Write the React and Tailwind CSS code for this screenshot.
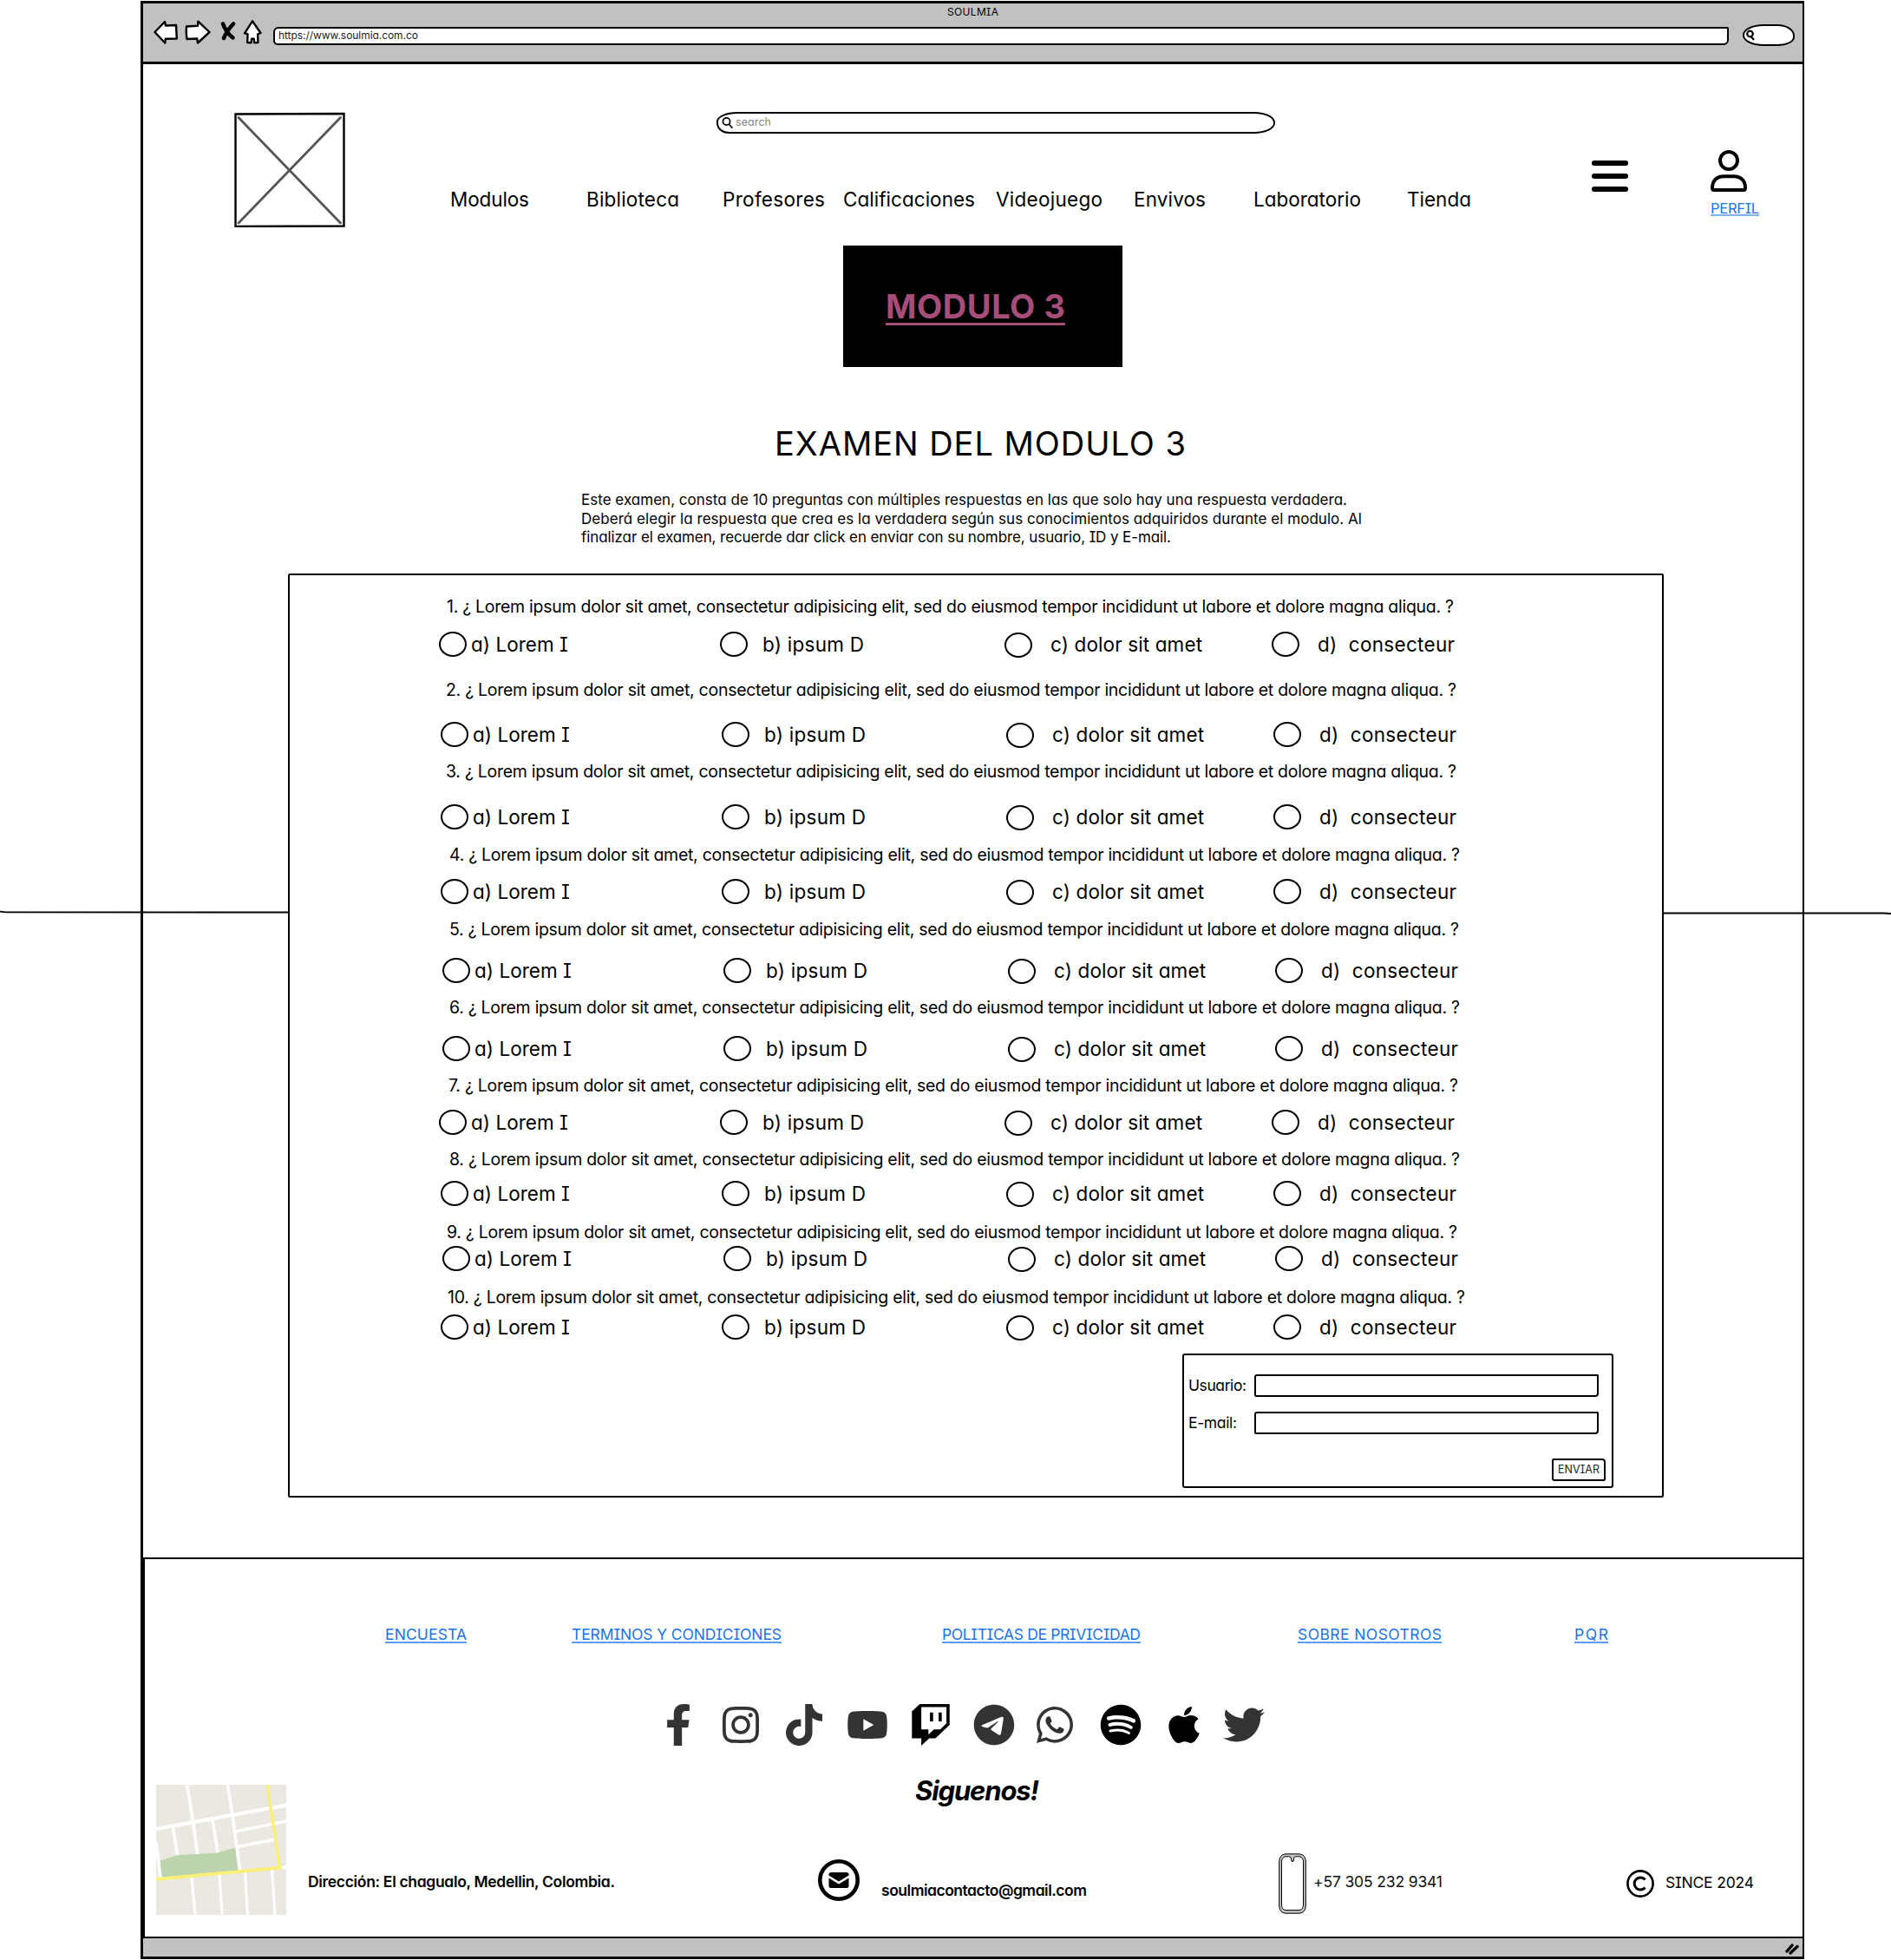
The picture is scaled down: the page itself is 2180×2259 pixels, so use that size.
import { useLayoutEffect, useRef } from "react";
import { FaFacebookF } from "react-icons/fa";
import {
  FaInstagram, FaTiktok, FaYoutube, FaTwitch, FaTelegram,
  FaWhatsapp, FaSpotify, FaApple, FaTwitter,
} from "react-icons/fa6";

/* A single line of text whose tracking is tuned to fill the width of its box. */
function T({ className = "", children }) {
  const box = useRef(null);
  const ink = useRef(null);
  useLayoutEffect(() => {
    const el = ink.current;
    el.style.letterSpacing = "0px";
    const target = box.current.clientWidth;
    const natural = el.getBoundingClientRect().width;
    const n = el.textContent.length - 1;
    el.style.letterSpacing = `${(target - natural) / n}px`;
  }, [children]);
  return (
    <div ref={box} className={`flex shrink-0 items-center whitespace-pre ${className}`}>
      <span ref={ink}>{children}</span>
    </div>
  );
}

const NAV = [
  ["Modulos", "ml-[1px] w-[91px]"],
  ["Biblioteca", "ml-[66px] w-[107px]"],
  ["Profesores", "ml-[50px] w-[118px]"],
  ["Calificaciones", "ml-[21px] w-[152px]"],
  ["Videojuego", "ml-[24px] w-[123px]"],
  ["Envivos", "ml-[36px] w-[83px]"],
  ["Laboratorio", "ml-[55px] w-[124px]"],
  ["Tienda", "ml-[53px] w-[74px]"],
];

const QUESTIONS = [
  { q: "mt-[23px] ml-[181px] w-[1161px]", o: "mt-[13px] ml-[172px]" },
  { q: "mt-[23px] ml-[180px] w-[1165px]", o: "mt-[21px] ml-[174px]" },
  { q: "mt-[13px] ml-[180px] w-[1165px]", o: "mt-[22px] ml-[174px]" },
  { q: "mt-[14px] ml-[184px] w-[1165px]", o: "mt-[12px] ml-[174px]" },
  { q: "mt-[14px] ml-[184px] w-[1164px]", o: "mt-[17px] ml-[176px]" },
  { q: "mt-[13px] ml-[184px] w-[1165px]", o: "mt-[17px] ml-[176px]" },
  { q: "mt-[13px] ml-[183px] w-[1164px]", o: "mt-[12px] ml-[172px]" },
  { q: "mt-[13px] ml-[184px] w-[1165px]", o: "mt-[9px] ml-[174px]" },
  { q: "mt-[15px] ml-[181px] w-[1165px]", o: "mt-0 ml-[176px]" },
  { q: "mt-[15px] ml-[182px] w-[1173px]", o: "mt-[4px] ml-[174px]" },
];

const LOREM =
  "¿ Lorem ipsum dolor sit amet, consectetur adipisicing elit, sed do eiusmod tempor incididunt ut labore et dolore magna aliqua. ?";

function Radio({ className }) {
  return <span className={`h-[29px] w-[32px] shrink-0 rounded-[50%] border-2 border-black ${className}`} />;
}

function Question({ n, q, o }) {
  return (
    <>
      <T className={`h-[28px] text-[19.5px] ${q}`}>{`${n}. ${LOREM}`}</T>
      <div className={`flex h-[32px] items-center text-[22.5px] ${o}`}>
        <Radio className="-mt-[2px]" />
        <T className="ml-[5px] w-[112px]">a) Lorem I</T>
        <Radio className="-mt-[2px] ml-[175px]" />
        <T className="ml-[17px] w-[117px]">b) ipsum D</T>
        <Radio className="ml-[162px] mt-[1px]" />
        <T className="ml-[21px] w-[175px]">c) dolor sit amet</T>
        <Radio className="-mt-[2px] ml-[80px]" />
        <T className="ml-[21px] w-[158px]">{"d)  consecteur"}</T>
      </div>
    </>
  );
}

function BrowserBar() {
  return (
    <header className="flex h-[73px] flex-col border-b-[3px] border-t-[3px] border-black bg-[#c1c1c1]">
      <T className="ml-[927px] mt-[1px] h-[18px] w-[59px] text-[12px]">SOULMIA</T>
      <div className="flex h-[32px] items-start">
        <svg className="ml-[12px] h-[28px] w-[127px]" viewBox="0 0 127 28" fill="#fff" stroke="#000" strokeWidth="2.4" strokeLinejoin="round">
          <path d="M1.500 14 13 2l1 4.500 12-.5.8 15.500-13 .3-.6 4.700Z" />
          <path d="M38 7.500l13-.8.4-5L64.500 14 51 26.500l-.8-5L38.500 22q-1.200-7-.5-14.500Z" />
          <path d="M80 4.500 Q84 15 91.500 20.500M92 4.500 Q84 13 81 21" strokeWidth="4.600" strokeLinecap="round" fill="none" />
          <path d="M114 1.300 123.500 15l-3.400 1.300.4 9.700-4.300.2-.5-4.500-2.700.1-.4 4.400-4.400-.2.3-9.800-3.500-.8Z" />
        </svg>
        <div className="ml-[11px] mt-[8px] flex h-[21px] w-[1678px] items-center rounded-[6px_2px_6px_5px] border-[2.500px] border-black bg-white">
          <T className="-mt-[1px] ml-[4px] w-[161px] text-[12px] text-[#222]">https://www.soulmia.com.co</T>
        </div>
        <div className="ml-[16px] mt-[5px] flex h-[25px] w-[60px] items-center rounded-[24px_20px_20px_24px/12px_13px_10px_12px] border-[2.500px] border-black bg-white">
          <svg className="ml-[1px] h-[13px] w-[11px]" viewBox="0 0 11 13" fill="none" stroke="#000" strokeWidth="2.200">
            <circle cx="5.500" cy="5" r="3.300" />
            <path d="m6.500 8 3.500 4" />
          </svg>
        </div>
      </div>
    </header>
  );
}

function SiteHeader() {
  return (
    <div className="flex h-[209px] items-start pt-[55px]">
      <svg className="ml-[105px] h-[133px] w-[128px]" viewBox="0 0 128 133" fill="none">
        <path d="M1.500 2.500 126.500 2v129.500l-125 .5Z" stroke="#000" strokeWidth="2.400" />
        <path d="M5 6.500 122.500 128M122.500 6.500 5 128" stroke="#555" strokeWidth="2.800" strokeLinecap="round" />
      </svg>
      <div className="ml-[120px] w-[1178px]">
        <div className="ml-[308px] flex h-[25px] w-[644px] items-center rounded-[24px_24px_24px_14px/11px_12px_12px_12px] border-2 border-black">
          <svg className="ml-[4px] h-[13px] w-[13px]" viewBox="0 0 13 13" fill="none" stroke="#000" strokeWidth="1.700" strokeLinecap="round">
            <circle cx="5.500" cy="5" r="4.100" />
            <path d="m8.500 8.300 3.500 3.900" />
          </svg>
          <T className="ml-[3px] w-[41px] text-[12.500px] text-[#85858c]">search</T>
        </div>
        <nav className="mt-[62px] flex h-[28px] items-center text-[22.500px]">
          {NAV.map(([label, cls]) => (
            <T key={label} className={cls}>{label}</T>
          ))}
        </nav>
      </div>
      <div className="ml-[139px] mt-[56px] flex w-[42px] flex-col gap-[9px]">
        <span className="h-[6px] rounded-full bg-black" />
        <span className="h-[6px] rounded-full bg-black" />
        <span className="h-[6px] rounded-full bg-black" />
      </div>
      <div className="ml-[95px] mt-[44px]">
        <svg className="h-[48px] w-[42px]" viewBox="0 0 42 48" fill="none" stroke="#000" strokeWidth="4">
          <circle cx="21" cy="12" r="10" />
          <path d="M2 43.500C2 35 7.500 30.200 15 30.200h12c7.500 0 13 4.800 13 13.300q0 2.500-2 2.500H4q-2 0-2-2.500Z" />
        </svg>
        <T className="mt-[6px] h-[22px] w-[56px] border-b-2 border-[#7fb1f5] pt-[6px] text-[16.500px] text-[#1a73e8]">PERFIL</T>
      </div>
    </div>
  );
}

function ExamForm() {
  return (
    <div className="ml-[1029px] mt-[14px] flex h-[155px] w-[497px] flex-col rounded-[3px] border-[2.500px] border-black text-[17.500px]">
      <div className="mt-[21px] flex h-[27px] items-center">
        <T className="ml-[5px] w-[67px]">Usuario:</T>
        <div className="ml-[9px] h-[26px] w-[397px] rounded-[3px_1px_4px_2px] border-[2.500px] border-black" />
      </div>
      <div className="mt-[16px] flex h-[27px] items-center">
        <T className="ml-[5px] w-[56px]">E-mail:</T>
        <div className="ml-[20px] h-[26px] w-[397px] rounded-[3px_1px_4px_2px] border-[2.500px] border-black" />
      </div>
      <button className="ml-[424px] mt-[28px] flex h-[26px] w-[62px] items-center rounded-[2px_4px_2px_3px] border-[2.500px] border-black">
        <T className="ml-[5px] w-[48px] text-[12.500px] text-[#222]">ENVIAR</T>
      </button>
    </div>
  );
}

const LINKS = [
  ["ENCUESTA", "ml-[277px] w-[94px]"],
  ["TERMINOS Y CONDICIONES", "ml-[121px] w-[242px]"],
  ["POLITICAS DE PRIVICIDAD", "ml-[185px] w-[229px]"],
  ["SOBRE NOSOTROS", "ml-[181px] w-[166px]"],
  ["PQR", "ml-[153px] w-[39px]"],
];

function CityMap() {
  return (
    <svg className="ml-[13px] h-[150px] w-[150px] shrink-0" viewBox="0 0 150 150" fill="none" stroke="#fff">
      <path d="M0 0h150v150H0Z" fill="#ebe8e1" stroke="none" />
      <path d="M4 88 25 81 70 78.500 91 72.500 95 98.500 6 107Z" fill="#bcd4ad" stroke="none" />
      <path d="M0 51 150 23.500" strokeWidth="4.200" />
      <path d="M35.500 0 42.500 42 47.500 80M82.500 0 88 35 96.500 98" strokeWidth="3.600" />
      <path d="M19.500 49 24.500 81M65 40 71 78M0 66 5 107M91 54 150 42M94 71.500 137 63M138 96.500 150 95" strokeWidth="3.400" />
      <path d="M41 107 45 150M73 104 76 150M102.500 101 105.500 150M133.500 98 137 150" strokeWidth="3.200" />
      <path d="M128 0 143 97.500" stroke="#fbf077" strokeWidth="3.400" />
      <path d="M0 109 144.500 95.500" stroke="#fbf077" strokeWidth="3.800" />
    </svg>
  );
}

function Footer() {
  return (
    <footer className="mt-[69px] flex h-[437px] flex-col border-l-2 border-t-2 border-black">
      <nav className="mt-[75px] flex h-[24px] items-start text-[17.500px] text-[#1a73e8]">
        {LINKS.map(([label, cls]) => (
          <T key={label} className={`h-[22px] border-b-2 border-[#5c9df2] pt-[4px] ${cls}`}>{label}</T>
        ))}
      </nav>
      <div className="ml-[591px] mt-[68px] flex h-[48px] text-[48px] text-[#333]">
        <FaFacebookF />
        <FaInstagram className="ml-[24px]" />
        <FaTiktok className="ml-[25px]" />
        <FaYoutube className="ml-[25px]" />
        <FaTwitch className="ml-[25px] text-black" />
        <FaTelegram className="ml-[25px]" />
        <FaWhatsapp className="ml-[22px]" />
        <FaSpotify className="ml-[28px] text-black" />
        <FaApple className="ml-[25px] text-black" />
        <FaTwitter className="ml-[21px]" />
      </div>
      <T className="ml-[888px] mt-[31px] h-[40px] w-[143px] text-[31px] font-bold italic">Siguenos!</T>
      <div className="-mt-[26px] flex h-[150px] items-start text-[17.500px]">
        <CityMap />
        <T className="ml-[25px] mt-[100px] h-[24px] w-[354px] font-semibold">Dirección: El chagualo, Medellin, Colombia.</T>
        <svg className="ml-[234px] mt-[86px] h-[48px] w-[48px] shrink-0" viewBox="0 0 48 48">
          <circle cx="24" cy="24" r="21.700" fill="none" stroke="#000" strokeWidth="4.600" />
          <path d="M12.500 17.500Q12.500 15 15 15h18q2.500 0 2.500 2.500v1L24 25.500 12.500 18.500Z" />
          <path d="M12.500 21.500 24 28.500 35.500 21.500V30.500Q35.500 33 33 33H15q-2.500 0-2.500-2.500Z" />
        </svg>
        <T className="ml-[25px] mt-[110px] h-[24px] w-[237px] font-semibold">soulmiacontacto@gmail.com</T>
        <svg className="ml-[221px] mt-[79px] h-[70px] w-[32px] shrink-0" viewBox="0 0 32 70" stroke="#000" strokeWidth="1">
          <path d="M8 .8h16Q31.300 1.500 31.300 10v50q0 8.500-7.300 9.200H8Q.7 68.500.7 60V10Q.7 1.500 8 .8Z" fill="#c1c1c1" />
          <path d="M8 3.800h4.500l1.600 1 .9 4.500h2l.9-4.500 1.600-1H24q4.500.7 4.500 6.500v49q0 5.500-4.500 6.300H8Q3.500 64.800 3.500 59.300v-49Q3.500 4.500 8 3.800Z" fill="#fff" />
        </svg>
        <T className="ml-[8px] mt-[100px] h-[24px] w-[149px] text-[#111]">+57 305 232 9341</T>
        <svg className="ml-[212px] mt-[98px] h-[32px] w-[32px] shrink-0" viewBox="0 0 32 32" fill="none" stroke="#000">
          <circle cx="16" cy="16" r="14.600" strokeWidth="2.600" />
          <path d="M21.500 11.500A7 7 0 1 0 21.500 20.500" strokeWidth="3" />
        </svg>
        <T className="ml-[13px] mt-[101px] h-[24px] w-[102px]">SINCE 2024</T>
      </div>
    </footer>
  );
}

export default function App() {
  return (
    <div className="relative h-[2259px] w-[2180px] overflow-hidden bg-white pt-[1px] font-['Inter',sans-serif] leading-none text-black [font-feature-settings:'cv11','cv08']">
      <div className="ml-[162px] flex h-[2257px] w-[1918px] flex-col border-l-[3px] border-r-2 border-black">
        <BrowserBar />
        <SiteHeader />
        <div className="ml-[807px] flex h-[140px] w-[322px] items-center bg-black">
          <T className="ml-[49px] h-[44px] w-[207px] border-b-[3px] border-[#a64d79] pt-[3px] text-[38px] font-bold text-[#a64d79]">MODULO 3</T>
        </div>
        <T className="ml-[728px] mt-[64px] h-[48px] w-[474px] text-[38px]">EXAMEN DEL MODULO 3</T>
        <div className="ml-[505px] mt-[30px] flex h-[66px] flex-col text-[17px]">
          <T className="h-[22px] w-[883px]">Este examen, consta de 10 preguntas con múltiples respuestas en las que solo hay una respuesta verdadera.</T>
          <T className="h-[22px] w-[900px]">Deberá elegir la respuesta que crea es la verdadera según sus conocimientos adquiridos durante el modulo. Al</T>
          <T className="h-[21px] w-[680px]">finalizar el examen, recuerde dar click en enviar con su nombre, usuario, ID y E-mail.</T>
        </div>
        <main className="ml-[167px] mt-[30px] flex h-[1065px] w-[1586px] flex-col rounded-[2px] border-2 border-black">
          {QUESTIONS.map((item, i) => (
            <Question key={i} n={i + 1} {...item} />
          ))}
          <ExamForm />
        </main>
        <Footer />
        <div className="flex h-[26px] items-start justify-end border-b-[3px] border-t-2 border-black bg-[#c1c1c1]">
          <svg className="mr-[4px] mt-[6px] h-[13px] w-[16px]" viewBox="0 0 16 13" stroke="#000" strokeWidth="3.400" strokeLinecap="round">
            <path d="M2 9 8 2M6 11 14 3.500" />
          </svg>
        </div>
      </div>
      <svg className="absolute left-0 top-[1048px] h-[8px] w-[332px]" viewBox="0 0 332 8" fill="none" stroke="#000">
        <path d="M0 2.700 7 3.400 332 3.500" strokeWidth="1.800" />
      </svg>
      <svg className="absolute right-0 top-[1048px] h-[8px] w-[263px]" viewBox="0 0 263 8" fill="none" stroke="#000">
        <path d="M0 4.500 255 4.500 263 5" strokeWidth="1.800" />
      </svg>
    </div>
  );
}
